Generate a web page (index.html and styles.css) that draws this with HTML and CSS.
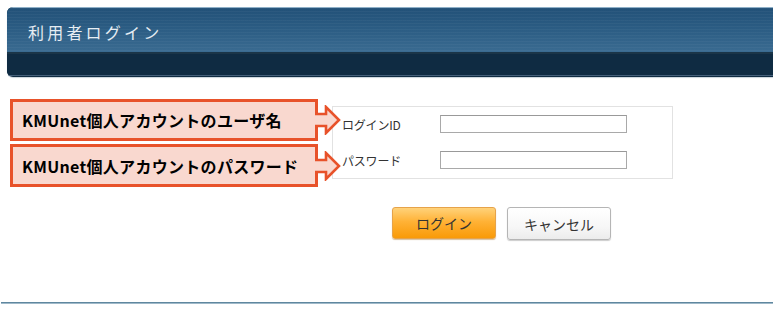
FILE: index.html
```html
<!DOCTYPE html>
<html lang="ja">
<head>
<meta charset="utf-8">
<title>利用者ログイン</title>
<link rel="stylesheet" href="styles.css">
</head>
<body>
<div class="header">
  <div class="header-top"><h1 class="title">利用者ログイン</h1></div>
  <div class="header-bottom"></div>
</div>
<div class="main">
  <div class="callouts">
    <div class="callout">KMUnet個人アカウントのユーザ名
      <svg class="arrow" width="26" height="30" viewBox="0 0 26 30"><path d="M0,9 H11 V2 L24,15 L11,28 V21 H0 Z" fill="#f9d8cf"/><path d="M0,9 H11 V2 L24,15 L11,28 V21 H0" fill="none" stroke="#e8522a" stroke-width="2.6" stroke-linejoin="miter"/></svg>
    </div>
    <div class="callout">KMUnet個人アカウントのパスワード
      <svg class="arrow" width="26" height="30" viewBox="0 0 26 30"><path d="M0,9 H11 V2 L24,15 L11,28 V21 H0 Z" fill="#f9d8cf"/><path d="M0,9 H11 V2 L24,15 L11,28 V21 H0" fill="none" stroke="#e8522a" stroke-width="2.6" stroke-linejoin="miter"/></svg>
    </div>
  </div>
  <div class="form-area">
    <div class="form-box">
      <div class="row"><span class="label">ログインID</span><input class="field" type="text"></div>
      <div class="row"><span class="label">パスワード</span><input class="field" type="password"></div>
    </div>
    <div class="buttons">
      <button class="btn btn-login">ログイン</button>
      <button class="btn btn-cancel">キャンセル</button>
    </div>
  </div>
</div>
<div class="footer-line"></div>
</body>
</html>
```
FILE: styles.css
```css
* { box-sizing: border-box; }
body {
  margin: 0;
  background: #fff;
  font-family: "Noto Sans CJK JP", "Noto Sans", sans-serif;
  width: 773px;
  height: 324px;
  overflow: hidden;
}
.header {
  margin: 7px 0 0 7px;
  height: 70px;
  border-radius: 6px 0 0 6px;
  overflow: hidden;
  background: #0f2b42;
  box-shadow: 0 1px 1px #c9d3da;
}
.header-top {
  height: 47px;
  border-top: 1px solid #8fb0c8;
  border-bottom: 2px solid #1b3548;
  background:
    repeating-linear-gradient(180deg, rgba(255,255,255,0.035) 0 1px, rgba(0,0,0,0.0) 1px 3px),
    linear-gradient(180deg, #225178 0%, #2c5d84 50%, #3a6b91 100%);
  display: flex;
  align-items: center;
  padding-left: 21px;
}
.title {
  margin: 0;
  font-weight: normal;
  font-size: 16px;
  letter-spacing: 3.2px;
  color: #e6edf3;
  padding-top: 4px;
}
.header-bottom {
  height: 22px;
  background: #0f2b42;
  border-bottom: 1px solid #45607a;
}
.main {
  display: flex;
  padding-left: 10px;
  margin-top: 22px;
}
.callouts {
  width: 322px;
  display: flex;
  flex-direction: column;
  gap: 3px;
}
.callout {
  position: relative;
  width: 308px;
  height: 42px;
  border: 3px solid #e8522a;
  background: #f9d8cf;
  display: flex;
  align-items: center;
  padding-left: 9px;
  font-size: 16px;
  font-weight: bold;
  color: #000;
  font-family: "Noto Sans CJK JP", sans-serif;
  letter-spacing: 0.3px;
}
.callout + .callout { height: 43px; }
.arrow {
  position: absolute;
  left: 302px;
  top: 50%;
  margin-top: -15px;
}
.form-area {
  display: flex;
  flex-direction: column;
  padding-top: 7px;
}
.form-box {
  width: 341px;
  height: 73px;
  border: 1px solid #e2e2e2;
  display: flex;
  flex-direction: column;
  padding: 8px 0 0 9px;
  gap: 18px;
}
.row {
  display: flex;
  align-items: center;
  height: 18px;
}
.label {
  width: 98px;
  font-size: 12px;
  color: #333;
  letter-spacing: -0.2px;
}
.field {
  width: 187px;
  height: 18px;
  border: 1px solid #a9a9a9;
  border-top-color: #999;
  background: #fff;
  padding: 0;
  margin: 0;
}
.buttons {
  display: flex;
  gap: 11px;
  margin: 28px 0 0 60px;
}
.btn {
  width: 104px;
  height: 32px;
  border-radius: 3px;
  font-family: "Noto Sans CJK JP", sans-serif;
  font-size: 14px;
  color: #333;
  padding: 0;
  cursor: pointer;
}
.btn-login {
  border: 1px solid #e6a34a;
  background: linear-gradient(180deg, #ffd27a 0%, #ffb236 45%, #f99a08 100%);
  box-shadow: 0 1px 1px #d8c0a0;
}
.btn-cancel {
  height: 33px;
  border: 1px solid #b5b5b5;
  background: linear-gradient(180deg, #ffffff 0%, #f7f7f7 60%, #ececec 100%);
  box-shadow: 0 1px 1px #ccc;
}
.footer-line {
  margin: 62px 0 0 1px;
  height: 2px;
  border-top: 1px solid #5f879f;
  border-bottom: 1px solid #9fb9c9;
}
```
